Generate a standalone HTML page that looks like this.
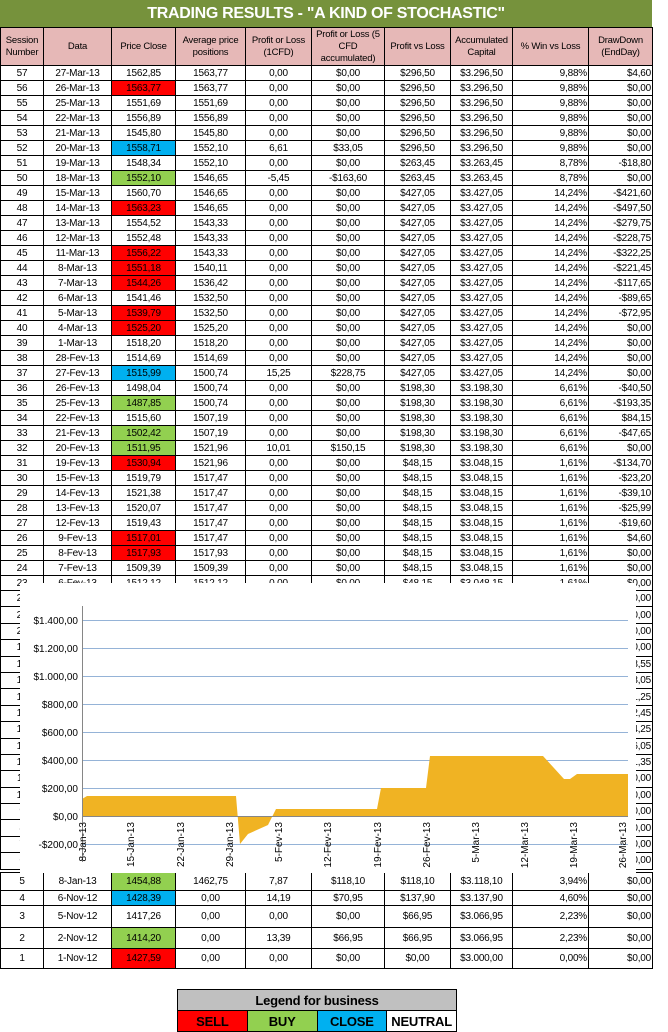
<!DOCTYPE html>
<html><head><meta charset="utf-8"><style>
*{margin:0;padding:0;box-sizing:border-box}
body{width:668px;height:1032px;background:#fff;position:relative;overflow:hidden;font-family:"Liberation Sans",Arial,sans-serif;font-size:10px;color:#000}
.title{position:absolute;left:0;top:0;width:652px;height:27px;background:#76923c;color:#fff;font-weight:bold;font-size:16px;text-align:center;line-height:27px;letter-spacing:-0.3px}
table{border-collapse:collapse;table-layout:fixed;position:absolute;left:0;width:652px}
td{border:1px solid #000;text-align:center;white-space:nowrap;overflow:hidden;padding:0 1px;font-size:10px;letter-spacing:-0.2px}
td.r{text-align:right}
thead td{background:#e6b8b7;line-height:12px;font-size:9.5px;white-space:normal}
tr.d td{height:15px;line-height:13px}
tr.h td{height:16.4px}
.R{background:#ff0000}.G{background:#92d050}.B{background:#00b0f0}
#top{top:27px}
.clip{position:absolute;left:0;top:0;width:668px;height:874px;overflow:hidden}
#bot{top:872px}
.leg{position:absolute;left:177px;top:989px;border-collapse:collapse;width:280px}
.leg td{font-weight:bold;font-size:13px;height:21px;border:1px solid #000}
</style></head><body>
<div class="title">TRADING RESULTS - "A KIND OF STOCHASTIC"</div>
<div class="clip">
<table id="top">
<colgroup><col style="width:43px"><col style="width:68px"><col style="width:64px"><col style="width:70px"><col style="width:66px"><col style="width:73px"><col style="width:66px"><col style="width:62px"><col style="width:76px"><col style="width:64px"></colgroup>
<thead><tr style="height:38px"><td>Session Number</td><td>Data</td><td>Price Close</td><td>Average price positions</td><td>Profit or Loss (1CFD)</td><td>Profit or Loss (5 CFD accumulated)</td><td>Profit vs Loss</td><td>Accumulated Capital</td><td>% Win vs Loss</td><td>DrawDown (EndDay)</td></tr></thead>
<tbody id="tb"></tbody>
</table>
</div>
<table id="bot">
<colgroup><col style="width:43px"><col style="width:68px"><col style="width:64px"><col style="width:70px"><col style="width:66px"><col style="width:73px"><col style="width:66px"><col style="width:62px"><col style="width:76px"><col style="width:64px"></colgroup>
<tr style="height:18px"><td>5</td><td>8-Jan-13</td><td class="G">1454,88</td><td>1462,75</td><td>7,87</td><td>$118,10</td><td>$118,10</td><td>$3.118,10</td><td class="r">3,94%</td><td class="r">$0,00</td></tr>
<tr style="height:15px"><td>4</td><td>6-Nov-12</td><td class="B">1428,39</td><td>0,00</td><td>14,19</td><td>$70,95</td><td>$137,90</td><td>$3.137,90</td><td class="r">4,60%</td><td class="r">$0,00</td></tr>
<tr style="height:22px"><td>3</td><td>5-Nov-12</td><td>1417,26</td><td>0,00</td><td>0,00</td><td>$0,00</td><td>$66,95</td><td>$3.066,95</td><td class="r">2,23%</td><td class="r">$0,00</td></tr>
<tr style="height:21px"><td>2</td><td>2-Nov-12</td><td class="G">1414,20</td><td>0,00</td><td>13,39</td><td>$66,95</td><td>$66,95</td><td>$3.066,95</td><td class="r">2,23%</td><td class="r">$0,00</td></tr>
<tr style="height:20px"><td>1</td><td>1-Nov-12</td><td class="R">1427,59</td><td>0,00</td><td>0,00</td><td>$0,00</td><td>$0,00</td><td>$3.000,00</td><td class="r">0,00%</td><td class="r">$0,00</td></tr>
</table>
<svg style="position:absolute;left:0;top:0" width="668" height="1032" font-family="Liberation Sans, Arial, sans-serif" font-size="10">
<rect x="20" y="583" width="616" height="290" fill="#fff"/>
<g stroke="#95b3d7" stroke-width="1">
<line x1="82" x2="628" y1="620.5" y2="620.5"/><line x1="82" x2="628" y1="648.5" y2="648.5"/><line x1="82" x2="628" y1="676.5" y2="676.5"/><line x1="82" x2="628" y1="704.5" y2="704.5"/><line x1="82" x2="628" y1="732.5" y2="732.5"/><line x1="82" x2="628" y1="760.5" y2="760.5"/><line x1="82" x2="628" y1="788.5" y2="788.5"/><line x1="82" x2="628" y1="844.5" y2="844.5"/>
</g>
<polygon fill="#f0b323" points="82,816 82,799 87,796 236,796 240,844 248,834 268,825 276,809 377,809 381,788 426,788 430,756 543,756 564,779 570,779 577,774 628,774 628,816"/>
<line x1="82" x2="628" y1="816.5" y2="816.5" stroke="#868686"/>
<line x1="82.5" x2="82.5" y1="606" y2="862" stroke="#868686"/>
<g text-anchor="end">
<text x="78" y="624">$1.400,00</text><text x="78" y="652">$1.200,00</text><text x="78" y="680">$1.000,00</text><text x="78" y="708">$800,00</text><text x="78" y="736">$600,00</text><text x="78" y="764">$400,00</text><text x="78" y="792">$200,00</text><text x="78" y="820">$0,00</text><text x="78" y="848">-$200,00</text>
</g>
<g text-anchor="end">
<text transform="translate(86,822) rotate(-90)">8-Jan-13</text>
<text transform="translate(134,822) rotate(-90)">15-Jan-13</text>
<text transform="translate(184,822) rotate(-90)">22-Jan-13</text>
<text transform="translate(233,822) rotate(-90)">29-Jan-13</text>
<text transform="translate(282,822) rotate(-90)">5-Fev-13</text>
<text transform="translate(331,822) rotate(-90)">12-Fev-13</text>
<text transform="translate(381,822) rotate(-90)">19-Fev-13</text>
<text transform="translate(430,822) rotate(-90)">26-Fev-13</text>
<text transform="translate(479,822) rotate(-90)">5-Mar-13</text>
<text transform="translate(528,822) rotate(-90)">12-Mar-13</text>
<text transform="translate(577,822) rotate(-90)">19-Mar-13</text>
<text transform="translate(626,822) rotate(-90)">26-Mar-13</text>
</g>
</svg>
<table class="leg">
<tr><td colspan="4" style="background:#c0c0c0">Legend for business</td></tr>
<tr><td class="R" style="width:67px">SELL</td><td class="G" style="width:71px">BUY</td><td class="B" style="width:78px">CLOSE</td><td style="width:64px">NEUTRAL</td></tr>
</table>
<script>
var rows=[
[57,"27-Mar-13","1562,85","","1563,77","0,00","$0,00","$296,50","$3.296,50","9,88%","$4,60"],
[56,"26-Mar-13","1563,77","R","1563,77","0,00","$0,00","$296,50","$3.296,50","9,88%","$0,00"],
[55,"25-Mar-13","1551,69","","1551,69","0,00","$0,00","$296,50","$3.296,50","9,88%","$0,00"],
[54,"22-Mar-13","1556,89","","1556,89","0,00","$0,00","$296,50","$3.296,50","9,88%","$0,00"],
[53,"21-Mar-13","1545,80","","1545,80","0,00","$0,00","$296,50","$3.296,50","9,88%","$0,00"],
[52,"20-Mar-13","1558,71","B","1552,10","6,61","$33,05","$296,50","$3.296,50","9,88%","$0,00"],
[51,"19-Mar-13","1548,34","","1552,10","0,00","$0,00","$263,45","$3.263,45","8,78%","-$18,80"],
[50,"18-Mar-13","1552,10","G","1546,65","-5,45","-$163,60","$263,45","$3.263,45","8,78%","$0,00"],
[49,"15-Mar-13","1560,70","","1546,65","0,00","$0,00","$427,05","$3.427,05","14,24%","-$421,60"],
[48,"14-Mar-13","1563,23","R","1546,65","0,00","$0,00","$427,05","$3.427,05","14,24%","-$497,50"],
[47,"13-Mar-13","1554,52","","1543,33","0,00","$0,00","$427,05","$3.427,05","14,24%","-$279,75"],
[46,"12-Mar-13","1552,48","","1543,33","0,00","$0,00","$427,05","$3.427,05","14,24%","-$228,75"],
[45,"11-Mar-13","1556,22","R","1543,33","0,00","$0,00","$427,05","$3.427,05","14,24%","-$322,25"],
[44,"8-Mar-13","1551,18","R","1540,11","0,00","$0,00","$427,05","$3.427,05","14,24%","-$221,45"],
[43,"7-Mar-13","1544,26","R","1536,42","0,00","$0,00","$427,05","$3.427,05","14,24%","-$117,65"],
[42,"6-Mar-13","1541,46","","1532,50","0,00","$0,00","$427,05","$3.427,05","14,24%","-$89,65"],
[41,"5-Mar-13","1539,79","R","1532,50","0,00","$0,00","$427,05","$3.427,05","14,24%","-$72,95"],
[40,"4-Mar-13","1525,20","R","1525,20","0,00","$0,00","$427,05","$3.427,05","14,24%","$0,00"],
[39,"1-Mar-13","1518,20","","1518,20","0,00","$0,00","$427,05","$3.427,05","14,24%","$0,00"],
[38,"28-Fev-13","1514,69","","1514,69","0,00","$0,00","$427,05","$3.427,05","14,24%","$0,00"],
[37,"27-Fev-13","1515,99","B","1500,74","15,25","$228,75","$427,05","$3.427,05","14,24%","$0,00"],
[36,"26-Fev-13","1498,04","","1500,74","0,00","$0,00","$198,30","$3.198,30","6,61%","-$40,50"],
[35,"25-Fev-13","1487,85","G","1500,74","0,00","$0,00","$198,30","$3.198,30","6,61%","-$193,35"],
[34,"22-Fev-13","1515,60","","1507,19","0,00","$0,00","$198,30","$3.198,30","6,61%","$84,15"],
[33,"21-Fev-13","1502,42","G","1507,19","0,00","$0,00","$198,30","$3.198,30","6,61%","-$47,65"],
[32,"20-Fev-13","1511,95","G","1521,96","10,01","$150,15","$198,30","$3.198,30","6,61%","$0,00"],
[31,"19-Fev-13","1530,94","R","1521,96","0,00","$0,00","$48,15","$3.048,15","1,61%","-$134,70"],
[30,"15-Fev-13","1519,79","","1517,47","0,00","$0,00","$48,15","$3.048,15","1,61%","-$23,20"],
[29,"14-Fev-13","1521,38","","1517,47","0,00","$0,00","$48,15","$3.048,15","1,61%","-$39,10"],
[28,"13-Fev-13","1520,07","","1517,47","0,00","$0,00","$48,15","$3.048,15","1,61%","-$25,99"],
[27,"12-Fev-13","1519,43","","1517,47","0,00","$0,00","$48,15","$3.048,15","1,61%","-$19,60"],
[26,"9-Fev-13","1517,01","R","1517,47","0,00","$0,00","$48,15","$3.048,15","1,61%","$4,60"],
[25,"8-Fev-13","1517,93","R","1517,93","0,00","$0,00","$48,15","$3.048,15","1,61%","$0,00"],
[24,"7-Fev-13","1509,39","","1509,39","0,00","$0,00","$48,15","$3.048,15","1,61%","$0,00"],
[23,"6-Fev-13","1512,12","","1512,12","0,00","$0,00","$48,15","$3.048,15","1,61%","$0,00"]];
var ends=["$0,00","$0,00","$0,00","$0,00","-$8,55","-$3,05","$1,25","-$2,45","$4,25","-$6,05","-$1,35","$0,00","$0,00","$0,00","$0,00","$0,00","$0,00","$0,00"];
var h="";
rows.forEach(function(r){h+='<tr class="d"><td>'+r[0]+'</td><td>'+r[1]+'</td><td class="'+r[3]+'">'+r[2]+'</td><td>'+r[4]+'</td><td>'+r[5]+'</td><td>'+r[6]+'</td><td>'+r[7]+'</td><td>'+r[8]+'</td><td class="r">'+r[9]+'</td><td class="r">'+r[10]+'</td></tr>';});
for(var n=22;n>=6;n--){h+='<tr class="h"><td>'+n+'</td><td></td><td class="'+(n==6?'B':'')+'"></td><td></td><td></td><td></td><td></td><td></td><td></td><td class="r">'+ends[22-n]+'</td></tr>';}
document.getElementById("tb").innerHTML=h;
</script>
</body></html>
